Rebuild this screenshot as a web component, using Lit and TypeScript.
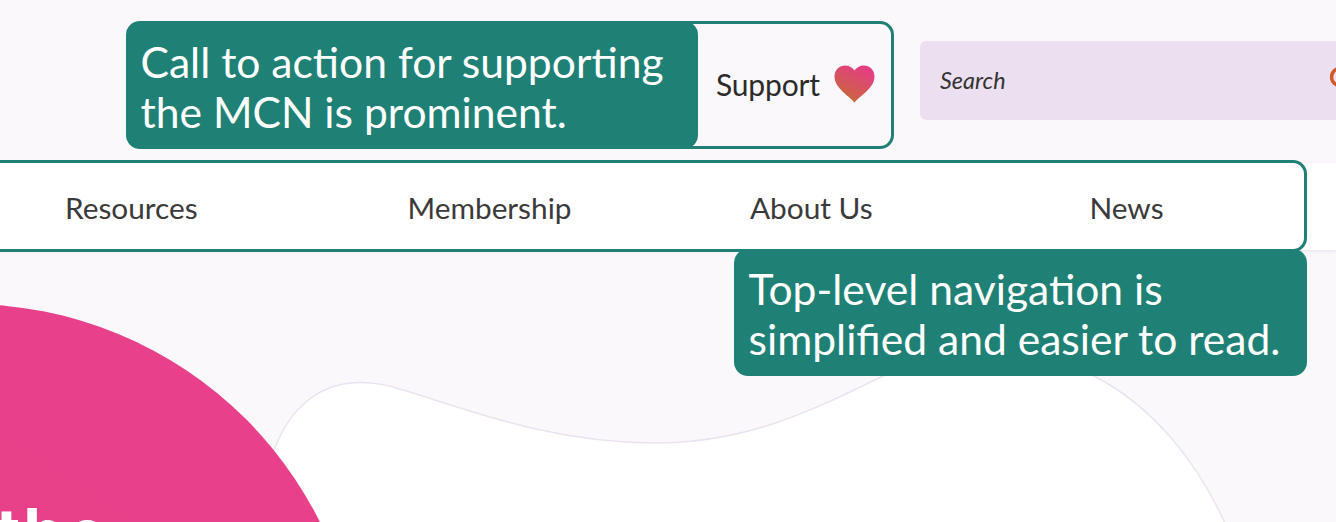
import { LitElement, html, css } from "lit";
import { customElement } from "lit/decorators.js";

@customElement("app-root")
export class AppRoot extends LitElement {
  static styles = css`
    :host {
      display: block;
      position: relative;
      width: 1336px;
      height: 522px;
      overflow: hidden;
      background: #fbf8fc;
      font-family: "Lato", "Liberation Sans", sans-serif;
      color: #333;
    }
    .top {
      height: 163px;
      display: flex;
      justify-content: flex-end;
      align-items: flex-start;
      padding-top: 41px;
      box-sizing: border-box;
    }
    .support {
      display: flex;
      align-items: center;
      gap: 14px;
      margin-right: 45px;
      margin-top: 4px;
      height: 79px;
      font-size: 30px;
      letter-spacing: -0.13px;
      color: #2b2b2b;
    }
    .support span { margin-top: -2px; }
    .support svg { display: block; margin-top: -2px; }
    .search {
      width: 416px;
      height: 79px;
      box-sizing: border-box;
      padding-left: 20px;
      padding-bottom: 2px;
      display: flex;
      align-items: center;
      background: #ece0f0;
      border-radius: 6px 0 0 6px;
      font-size: 23.4px;
      font-style: italic;
      color: #333;
      position: relative;
    }
    .search svg { position: absolute; left: 410px; top: 25px; }
    nav {
      height: 87px;
      background: #fff;
      box-shadow: 0 1px 4px rgba(90, 60, 120, 0.12);
      display: grid;
      grid-template-columns: 65px 342.5px 342.5px 339.5px auto;
      align-items: center;
      padding-top: 2px;
      box-sizing: border-box;
      font-size: 29.8px;
      color: #3a3a3a;
      position: relative;
    }
    nav .first { grid-column: 2; }
    .hero {
      position: absolute;
      left: 0;
      top: 250px;
      width: 1336px;
      height: 272px;
      overflow: hidden;
    }
    .hero svg { position: absolute; left: 0; top: 0; }
    .hero-title {
      position: absolute;
      left: -4px;
      top: 246px;
      font-family: "Inter", "Liberation Sans", sans-serif;
      font-size: 66px;
      font-weight: 700;
      line-height: 72px;
      letter-spacing: 3px;
      color: #fff;
    }
    .outline {
      position: absolute;
      box-sizing: border-box;
      border: 3px solid #1f8175;
      border-radius: 14px;
    }
    .outline.cta { left: 330px; top: 21px; width: 564px; height: 128px; }
    .outline.navline { left: -20px; top: 160px; width: 1327px; height: 92px; }
    .note {
      position: absolute;
      box-sizing: border-box;
      background: #1f8175;
      color: #fff;
      border-radius: 14px;
      font-size: 42.6px;
      line-height: 50px;
      white-space: nowrap;
    }
    .note.a { left: 126px; top: 21px; width: 572px; height: 128px; padding: 16px 14.5px; }
    .note.b { left: 734px; top: 249px; width: 573px; height: 127px; padding: 15px 14.5px; }
  `;

  render() {
    return html`
      <div class="hero">
        <svg width="1336" height="272" viewBox="0 250 1336 272">
          <defs>
            <linearGradient id="pink" x1="0.75" y1="0.2" x2="0.2" y2="1">
              <stop offset="0" stop-color="#e8408a" />
              <stop offset="0.6" stop-color="#e74187" />
              <stop offset="1" stop-color="#e04d72" />
            </linearGradient>
          </defs>
          <path
            d="M257 540 C258 480 278 425 305 403 C330 380 365 378 400 389 C470 410 550 443 655 443 C745 443 810 412 883 376 C940 352 1040 352 1094 376 C1150 405 1200 460 1232 540 Z"
            fill="#fff"
            stroke="#ebe3f0"
            stroke-width="1.5"
          />
          <circle cx="-32" cy="697" r="393" fill="url(#pink)" />
        </svg>
        <div class="hero-title">the</div>
      </div>
      <div class="top">
        <div class="support">
          <span>Support</span>
          <svg width="41" height="38" viewBox="0 0 42 38" preserveAspectRatio="none" aria-hidden="true">
            <defs>
              <linearGradient id="heart" x1="0.85" y1="0.05" x2="0.35" y2="1">
                <stop offset="0" stop-color="#e63b88" />
                <stop offset="1" stop-color="#c9683a" />
              </linearGradient>
            </defs>
            <path
              d="M21 37.5 C15 30.5 0.5 23 0.5 11.5 C0.5 5 5.5 0.5 11.5 0.5 C15.5 0.5 19 2.5 21 5.5 C23 2.5 26.5 0.5 30.5 0.5 C36.5 0.5 41.5 5 41.5 11.5 C41.5 23 27 30.5 21 37.5 Z"
              fill="url(#heart)"
            />
          </svg>
        </div>
        <div class="search">
          <span>Search</span>
          <svg width="24" height="30" viewBox="0 0 24 30" aria-hidden="true">
            <circle cx="10" cy="11" r="8.5" fill="none" stroke="#d4572a" stroke-width="3.5" />
          </svg>
        </div>
      </div>
      <nav>
        <span class="first">Resources</span>
        <span>Membership</span>
        <span>About Us</span>
        <span>News</span>
      </nav>
      <div class="outline cta"></div>
      <div class="outline navline"></div>
      <div class="note a">Call to action for supporting<br />the MCN is prominent.</div>
      <div class="note b">Top-level navigation is<br />simplified and easier to read.</div>
    `;
  }
}
